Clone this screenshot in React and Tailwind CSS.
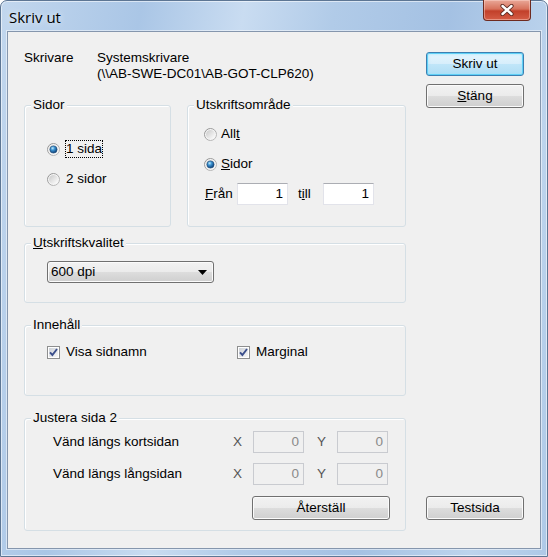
const Radio = ({ checked }) => (
    <svg width="13" height="13" viewBox="0 0 13 13" className="shrink-0">
        <defs>
            <linearGradient id="radioRing" x1="0" y1="0" x2="1" y2="1">
                <stop offset="0" stopColor="#8a8a8a" />
                <stop offset="1" stopColor="#c4c4c4" />
            </linearGradient>
            <linearGradient id="radioFill" x1="0" y1="0" x2="1" y2="1">
                <stop offset="0" stopColor="#c9c9c9" />
                <stop offset="1" stopColor="#ffffff" />
            </linearGradient>
            <radialGradient id="radioDot" cx="0.38" cy="0.32" r="0.7">
                <stop offset="0" stopColor="#c4ebfc" />
                <stop offset="0.4" stopColor="#3b93d2" />
                <stop offset="1" stopColor="#0d3c73" />
            </radialGradient>
        </defs>
        <circle cx="6.5" cy="6.5" r="6" fill="#f5f5f5" stroke="url(#radioRing)" />
        <circle cx="6.5" cy="6.5" r="4.5" fill="url(#radioFill)" />
        {checked && <circle cx="6.5" cy="6.5" r="3.6" fill="url(#radioDot)" stroke="#1d4c7a" strokeWidth="0.6" />}
    </svg>
);

const Check = () => (
    <svg width="13" height="13" viewBox="0 0 13 13" className="shrink-0">
        <defs>
            <linearGradient id="checkFill" x1="0" y1="0" x2="1" y2="1">
                <stop offset="0" stopColor="#cdd1d7" />
                <stop offset="1" stopColor="#f8f8f8" />
            </linearGradient>
        </defs>
        <rect x="0.5" y="0.5" width="12" height="12" fill="#ffffff" stroke="#8e8f8f" />
        <rect x="2" y="2" width="9" height="9" fill="url(#checkFill)" />
        <path d="M3 6.3 L5.4 9 L10 3" fill="none" stroke="#3b4f8c" strokeWidth="1.9" />
    </svg>
);

const Button = ({ children, primary, className }) => (
    <button
        type="button"
        className={`flex items-center justify-center rounded-[3px] border leading-[16px] text-black ${
            primary
                ? 'border-[#3c7fb1] bg-[linear-gradient(#e6f5fd_0%,#d6eefb_50%,#c0e6f9_50%,#b0ddf4_100%)] shadow-[inset_0_0_0_1px_#5fd0f6,inset_0_0_3px_1px_#a2e6fb]'
                : 'border-[#707070] bg-[linear-gradient(#f2f2f2_0%,#ebebeb_50%,#dddddd_50%,#cfcfcf_100%)] shadow-[inset_0_0_0_1px_#fbfbfb]'
        } ${className}`}
    >
        {children}
    </button>
);

const TextBox = ({ value, disabled }) => (
    <div
        className={`flex h-[22px] w-[51px] shrink-0 items-center justify-end border pr-[4px] ${
            disabled
                ? 'border-[#c9cbd0] bg-[#f0f0f0] text-[#8a8a8a]'
                : 'border-[#e2e3ea] border-t-[#abadb3] bg-white text-black'
        }`}
    >
        {value}
    </div>
);

const Group = ({ label, className, children }) => (
    <div className={`rounded-[3px] border border-[#d5dfe5] shadow-[inset_1px_1px_0_#ffffff] ${className}`}>
        <div className="-mt-[9px] ml-[6px] w-fit bg-[#f0f0f0] px-[2px] leading-[16px]">{label}</div>
        {children}
    </div>
);

const App = () => {
    return (
        <div className="flex h-[557px] w-[548px] flex-col rounded-t-[7px] border border-[#5d7694] bg-[linear-gradient(100deg,#c2d7ee_0%,#aac6e6_22%,#c9dcf1_38%,#b1cbe8_52%,#a4c1e3_70%,#bdd4ed_88%,#aec9e7_100%)] shadow-[inset_0_0_0_1px_rgba(255,255,255,0.55)]">
            <div className="flex h-[30px] shrink-0 items-start">
                <div className="ml-[8px] pt-[6px] font-['Open_Sans',sans-serif] text-[15px] leading-[20px] text-black [text-shadow:0_0_6px_rgba(255,255,255,0.9)]">
                    Skriv ut
                </div>
                <div className="-mt-[1px] ml-auto mr-[16px] flex h-[21px] w-[48px] items-center justify-center rounded-b-[4px] border border-t-0 border-[#6e2a1f] bg-[linear-gradient(#e9a898_0%,#d7725c_45%,#c2402a_55%,#d45c45_100%)] shadow-[inset_0_0_0_1px_rgba(255,220,210,0.45)]">
                    <svg width="14" height="12" viewBox="0 0 14 12">
                        <path d="M2.5 2 L11.5 10 M11.5 2 L2.5 10" stroke="#5a2a22" strokeWidth="4.2" strokeLinecap="round" />
                        <path d="M2.5 2 L11.5 10 M11.5 2 L2.5 10" stroke="#ffffff" strokeWidth="2.4" strokeLinecap="round" />
                    </svg>
                </div>
            </div>

            <div className="ml-[6px] flex h-[518px] w-[534px] border border-[#8596ad] bg-[#f0f0f0] font-['Liberation_Sans',Arial,sans-serif] text-[13.5px] leading-[16px] text-black shadow-[0_0_0_1px_rgba(255,255,255,0.5)]">
                <div className="ml-[16px] w-[382px] pt-[18px]">
                    <div className="flex">
                        <div className="w-[73px]">Skrivare</div>
                        <div>
                            <div>Systemskrivare</div>
                            <div>(\\AB-SWE-DC01\AB-GOT-CLP620)</div>
                        </div>
                    </div>

                    <div className="mt-[23px] flex gap-[16px]">
                        <Group label="Sidor" className="h-[122px] w-[147px]">
                            <div className="ml-[22px] mt-[28px] flex h-[16px] items-center">
                                <Radio checked />
                                <span className="ml-[6px] outline-1 outline-dotted outline-black">1 sida</span>
                            </div>
                            <div className="ml-[22px] mt-[14px] flex h-[16px] items-center">
                                <Radio />
                                <span className="ml-[6px]">2 sidor</span>
                            </div>
                        </Group>

                        <Group label="Utskriftsområde" className="h-[122px] w-[219px]">
                            <div className="ml-[16px] mt-[13px] flex h-[16px] items-center">
                                <Radio />
                                <span className="ml-[4px]">
                                    All<u>t</u>
                                </span>
                            </div>
                            <div className="ml-[16px] mt-[14px] flex h-[16px] items-center">
                                <Radio checked />
                                <span className="ml-[4px]">
                                    <u>S</u>idor
                                </span>
                            </div>
                            <div className="mt-[11px] flex h-[22px] items-center">
                                <span className="ml-[17px] w-[32px]">
                                    <u>F</u>rån
                                </span>
                                <TextBox value="1" />
                                <span className="ml-[10px] w-[25px]">
                                    t<u>i</u>ll
                                </span>
                                <TextBox value="1" />
                            </div>
                        </Group>
                    </div>

                    <Group label={<><u>U</u>tskriftskvalitet</>} className="mt-[16px] h-[60px]">
                        <div className="ml-[22px] mt-[10px] flex h-[22px] w-[167px] items-center justify-between rounded-[3px] border border-[#707070] bg-[linear-gradient(#f2f2f2_0%,#ebebeb_50%,#dddddd_50%,#cfcfcf_100%)] pl-[3px] pr-[6px] shadow-[inset_0_0_0_1px_#fbfbfb]">
                            <span>600 dpi</span>
                            <svg width="9" height="5" viewBox="0 0 9 5">
                                <polygon points="0,0 9,0 4.5,5" fill="#000000" />
                            </svg>
                        </div>
                    </Group>

                    <Group label="Innehåll" className="mt-[22px] h-[71px]">
                        <div className="ml-[22px] mt-[11px] flex h-[16px] items-center">
                            <div className="flex w-[190px] items-center">
                                <Check />
                                <span className="ml-[6px]">Visa sidnamn</span>
                            </div>
                            <div className="flex items-center">
                                <Check />
                                <span className="ml-[6px]">Marginal</span>
                            </div>
                        </div>
                    </Group>

                    <Group label="Justera sida 2" className="mt-[22px] h-[113px]">
                        <div className="mt-[5px] flex h-[22px] items-center">
                            <span className="ml-[28px] w-[180px]">Vänd längs kortsidan</span>
                            <span className="w-[20px] text-[#555555]">X</span>
                            <TextBox value="0" disabled />
                            <span className="ml-[13px] w-[20px] text-[#555555]">Y</span>
                            <TextBox value="0" disabled />
                        </div>
                        <div className="mt-[10px] flex h-[22px] items-center">
                            <span className="ml-[28px] w-[180px]">Vänd längs långsidan</span>
                            <span className="w-[20px] text-[#555555]">X</span>
                            <TextBox value="0" disabled />
                            <span className="ml-[13px] w-[20px] text-[#555555]">Y</span>
                            <TextBox value="0" disabled />
                        </div>
                        <Button className="ml-[227px] mt-[11px] h-[24px] w-[138px]">Återställ</Button>
                    </Group>
                </div>

                <div className="ml-[20px] flex w-[98px] flex-col pb-[28px] pt-[20px]">
                    <Button primary className="h-[24px] w-[98px]">Skriv ut</Button>
                    <Button className="mt-[8px] h-[24px] w-[98px]">
                        <span>
                            <u>S</u>täng
                        </span>
                    </Button>
                    <Button className="mt-auto h-[24px] w-[98px]">Testsida</Button>
                </div>
            </div>
        </div>
    );
};

export default App;
